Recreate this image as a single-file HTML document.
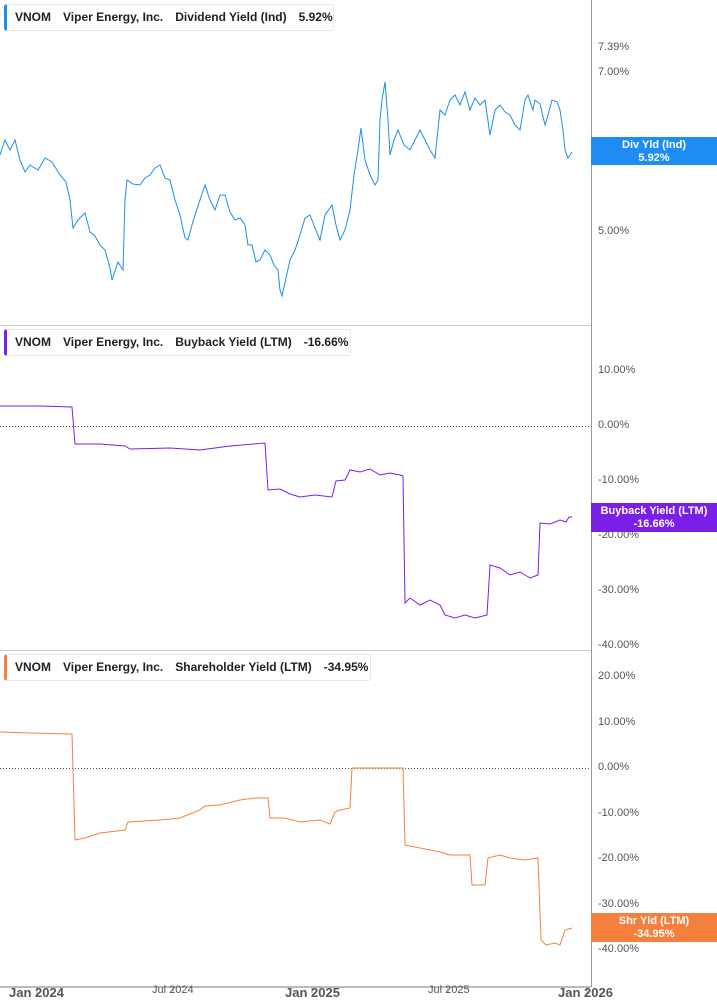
<!DOCTYPE html><html><head><style>body{margin:0;background:#fff;font-family:"Liberation Sans",sans-serif}
.h{position:absolute;left:4px;height:25px;border:1px solid #e8e8e8;border-left:3px solid;border-radius:3px;background:#fff;font-size:12px;font-weight:bold;color:#222;line-height:25px;padding-left:8px;white-space:nowrap}
.h span{margin-right:12px}.h .n{font-weight:normal;font-weight:600}
.t{position:absolute;left:598px;font-size:11px;color:#555}
.l{position:absolute;left:591px;width:126px;color:#fff;font-size:11px;font-weight:bold;text-align:center;line-height:13px;padding-top:2px}
.x{position:absolute;top:985px;font-size:13px;font-weight:bold;color:#555}
.xs{position:absolute;top:984px;font-size:11px;color:#555}</style></head><body>
<svg width="717" height="1005" style="position:absolute;left:0;top:0">
<g stroke="#999" stroke-width="1"><line x1="591.5" y1="0" x2="591.5" y2="987"/><line x1="0" y1="325.5" x2="591" y2="325.5" stroke="#ccc"/><line x1="0" y1="650.5" x2="591" y2="650.5" stroke="#ccc"/></g>
<line x1="0" y1="987" x2="591" y2="987" stroke="#bbb" stroke-width="2"/>
<g stroke="#999"><line x1="37" y1="987" x2="37" y2="993"/><line x1="173" y1="987" x2="173" y2="993"/><line x1="312" y1="987" x2="312" y2="993"/><line x1="448" y1="987" x2="448" y2="993"/><line x1="587" y1="987" x2="587" y2="993"/></g>
<line x1="0" y1="426.5" x2="591" y2="426.5" stroke="#555" stroke-dasharray="1,2"/>
<line x1="0" y1="768.5" x2="591" y2="768.5" stroke="#555" stroke-dasharray="1,2"/>
<polyline fill="none" stroke="#1e8cf0" stroke-width="1" points="0,155 5,140 10,150 15,140 20,160 25,172 30,165 38,170 45,158 52,162 60,175 66,182 70,200 73,228 78,220 85,213 90,232 95,236 100,245 105,250 110,268 112,280 118,262 123,270 125,200 127,180 133,184 140,185 145,178 150,175 155,168 160,165 165,178 170,180 175,200 180,215 185,238 188,240 192,225 195,215 200,200 205,185 210,200 215,210 220,195 225,195 230,212 235,220 240,218 245,225 248,245 252,245 256,262 260,260 265,250 270,255 274,265 278,270 280,290 282,296 286,278 290,260 295,250 300,235 305,218 310,215 315,228 320,240 325,215 332,205 336,225 340,240 345,230 350,210 354,175 358,150 361,128 365,160 370,175 375,185 378,180 380,120 382,100 385,82 388,120 390,155 394,140 398,130 404,145 410,150 415,140 420,130 425,140 430,150 435,158 440,110 445,115 450,100 455,95 460,105 465,92 470,110 475,98 480,105 485,100 490,135 495,110 500,105 505,112 510,115 515,125 520,130 525,100 528,95 533,110 535,100 540,104 545,125 548,115 552,100 557,102 560,110 563,130 565,150 568,158 572,152"/>
<polyline fill="none" stroke="#7a1fe8" stroke-width="1" points="0,406 40,406 72,407 75,444 100,444 125,446 130,449 170,448 200,450 230,446 265,443 268,490 280,489 290,494 300,497 315,495 332,497 336,481 345,480 350,470 360,472 370,469 380,475 390,473 400,475 403,476 405,603 410,598 420,605 430,600 440,605 445,615 455,618 465,615 475,618 487,615 490,565 500,568 510,575 520,572 530,578 538,575 540,523 550,524 560,520 566,522 569,517 572,517"/>
<polyline fill="none" stroke="#f5803e" stroke-width="1" points="0,732 30,733 72,734 75,840 85,838 100,833 125,830 128,822 160,820 180,818 200,810 205,806 220,805 240,800 255,798 268,798 270,818 285,818 300,822 320,820 330,824 335,812 340,810 350,808 352,768 375,768 403,768 405,845 420,848 440,852 450,855 470,855 472,885 485,885 488,858 500,855 510,858 525,860 538,858 541,940 546,945 555,943 560,945 565,930 572,928"/>
</svg>
<div class="h" style="top:4px;width:318px;border-left-color:#1e8cf0"><span>VNOM</span><span>Viper Energy, Inc.</span><span class="n">Dividend Yield (Ind)</span><span>5.92%</span></div>
<div class="h" style="top:329px;width:335px;border-left-color:#7a1fe8"><span>VNOM</span><span>Viper Energy, Inc.</span><span class="n">Buyback Yield (LTM)</span><span>-16.66%</span></div>
<div class="h" style="top:654px;width:355px;border-left-color:#f5803e"><span>VNOM</span><span>Viper Energy, Inc.</span><span class="n">Shareholder Yield (LTM)</span><span>-34.95%</span></div>
<div class="t" style="top:41px">7.39%</div><div class="t" style="top:66px">7.00%</div><div class="t" style="top:225px">5.00%</div>
<div class="t" style="top:364px">10.00%</div><div class="t" style="top:419px">0.00%</div><div class="t" style="top:474px">-10.00%</div><div class="t" style="top:529px">-20.00%</div><div class="t" style="top:584px">-30.00%</div><div class="t" style="top:639px">-40.00%</div>
<div class="t" style="top:670px">20.00%</div><div class="t" style="top:716px">10.00%</div><div class="t" style="top:761px">0.00%</div><div class="t" style="top:807px">-10.00%</div><div class="t" style="top:852px">-20.00%</div><div class="t" style="top:898px">-30.00%</div><div class="t" style="top:943px">-40.00%</div>
<div class="l" style="top:137px;height:26px;background:#1e8cf0">Div Yld (Ind)<br>5.92%</div>
<div class="l" style="top:503px;height:27px;background:#7a1fe8">Buyback Yield (LTM)<br>-16.66%</div>
<div class="l" style="top:913px;height:27px;background:#f5803e">Shr Yld (LTM)<br>-34.95%</div>
<div class="x" style="left:9px">Jan 2024</div><div class="xs" style="left:152px">Jul 2024</div><div class="x" style="left:285px">Jan 2025</div><div class="xs" style="left:428px">Jul 2025</div><div class="x" style="left:558px">Jan 2026</div>
</body></html>
